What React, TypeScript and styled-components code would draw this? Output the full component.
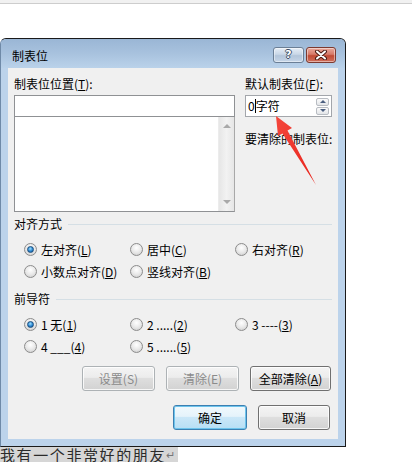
import React from 'react';
import styled, { createGlobalStyle } from 'styled-components';

const Global = createGlobalStyle`
  html, body { margin: 0; padding: 0; background: #fff; }
  body {
    font-family: "Noto Sans CJK SC", "Noto Sans", sans-serif;
    font-size: 12px;
    color: #000;
  }
`;

const Page = styled.div`
  position: relative;
  width: 412px;
  height: 462px;
  overflow: hidden;
  display: flex;
  flex-direction: column;
`;

const TopBand = styled.div`
  height: 4px;
  background: #f1f1f1;
  border-bottom: 1px solid #cdcdcd;
`;

const Dialog = styled.div`
  margin-top: 34px;
  width: 346px;
  box-sizing: border-box;
  border: 1px solid #1a1a1a;
  border-left-color: #6f8aa8;
  border-radius: 6px 6px 0 0;
  background: #bcd3eb;
  display: flex;
  flex-direction: column;
`;

const TitleBar = styled.div`
  height: 29px;
  box-sizing: border-box;
  padding: 0 9px 0 11px;
  display: flex;
  align-items: flex-start;
  border-radius: 5px 5px 0 0;
  background: linear-gradient(#9ab6d5 0%, #a8c2de 50%, #bad2ea 100%);
`;

const Title = styled.div`
  margin-top: 9px;
  line-height: 16px;
  flex: 1;
  color: #000;
`;

const CaptionButtons = styled.div`
  margin-top: 8px;
  display: flex;
  gap: 2px;
`;

const CapButton = styled.div<{ $close?: boolean }>`
  width: ${p => (p.$close ? 30 : 31)}px;
  height: 16px;
  box-sizing: border-box;
  border: 1px solid ${p => (p.$close ? '#7c3a30' : '#6b7f96')};
  border-radius: 3px;
  background: ${p =>
    p.$close
      ? 'linear-gradient(#e9a99c 0%, #d77a69 45%, #c14a34 55%, #d0705c 100%)'
      : 'linear-gradient(#e6eef7 0%, #c9d7e7 45%, #b3c5da 55%, #c6d6e8 100%)'};
  display: flex;
  align-items: center;
  justify-content: center;
  box-shadow: inset 0 0 0 1px rgba(255, 255, 255, 0.45);
`;

const HelpGlyph = styled.span`
  font-family: "DejaVu Sans", sans-serif;
  font-weight: bold;
  font-size: 11px;
  line-height: 12px;
  color: #fff;
  text-shadow: 1px 0 0 #3d4f66, -1px 0 0 #3d4f66, 0 1px 0 #3d4f66, 0 -1px 0 #3d4f66;
`;

const Frame = styled.div`
  padding: 0 7px 7px 7px;
  display: flex;
`;

const Client = styled.div`
  width: 330px;
  height: 371px;
  box-sizing: border-box;
  background: #f0f0f0;
  padding: 5px 6px 9px 6px;
  display: flex;
  flex-direction: column;
`;

const TopRow = styled.div`
  display: flex;
  gap: 10px;
`;

const LeftCol = styled.div`
  width: 221px;
  display: flex;
  flex-direction: column;
`;

const RightCol = styled.div`
  width: 87px;
  display: flex;
  flex-direction: column;
`;

const Label = styled.div<{ $gap?: number }>`
  line-height: ${p => (p.$gap ? 16 : 22)}px;
  height: ${p => (p.$gap ? 16 : 22)}px;
  margin-top: ${p => p.$gap ?? 0}px;
  white-space: nowrap;
`;

const TextBox = styled.div`
  height: 22px;
  box-sizing: border-box;
  border: 1px solid #8f9194;
  background: #fff;
`;

const List = styled.div`
  height: 95px;
  box-sizing: border-box;
  border: 1px solid #8f9194;
  border-top: none;
  border-right-color: #a8a8a8;
  background: #fff;
  display: flex;
  justify-content: flex-end;
`;

const ScrollTrack = styled.div`
  width: 16px;
  background: linear-gradient(90deg, #e6e6e6, #f2f2f2 50%, #e6e6e6);
  border-left: 1px solid #ececec;
  display: flex;
  flex-direction: column;
  justify-content: space-between;
  align-items: center;
  padding: 7px 0;
  box-sizing: border-box;
`;

const Tri = styled.span<{ $down?: boolean }>`
  width: 0;
  height: 0;
  border-left: 4px solid transparent;
  border-right: 4px solid transparent;
  ${p => (p.$down ? 'border-top: 4px solid #a9a9a9;' : 'border-bottom: 4px solid #a9a9a9;')}
`;

const SpinBox = styled.div`
  height: 22px;
  box-sizing: border-box;
  border: 1px solid #a3a6ab;
  background: #fff;
  display: flex;
  align-items: center;
  padding: 0 2px 0 2px;
`;

const SpinText = styled.span`
  flex: 1;
  line-height: 18px;
  display: flex;
  align-items: center;
`;

const Caret = styled.span`
  width: 1px;
  height: 14px;
  background: #000;
`;

const SpinButtons = styled.div`
  display: flex;
  flex-direction: column;
  gap: 1px;
`;

const SpinBtn = styled.div`
  width: 13px;
  height: 8px;
  box-sizing: border-box;
  border: 1px solid #b8bcc2;
  border-radius: 2px;
  background: linear-gradient(#fbfbfb, #e3e5e8);
  display: flex;
  align-items: center;
  justify-content: center;
`;

const SmallTri = styled.span<{ $down?: boolean }>`
  width: 0;
  height: 0;
  border-left: 3px solid transparent;
  border-right: 3px solid transparent;
  ${p => (p.$down ? 'border-top: 3px solid #4b5f80;' : 'border-bottom: 3px solid #4b5f80;')}
`;

const GroupHeader = styled.div<{ $mt: number }>`
  margin-top: ${p => p.$mt}px;
  height: 16px;
  line-height: 16px;
  display: flex;
  align-items: center;
  gap: 6px;
  &::after {
    content: '';
    flex: 1;
    height: 1px;
    background: #d5dfe5;
  }
`;

const RadioGrid = styled.div`
  margin-top: 6px;
  padding-left: 10px;
  display: grid;
  grid-template-columns: 106px 105px 1fr;
  grid-auto-rows: 22px;
`;

const RadioItem = styled.div`
  display: flex;
  align-items: center;
  gap: 4px;
  white-space: nowrap;
`;

const RadioCircle = styled.span<{ $on?: boolean }>`
  width: 13px;
  height: 13px;
  box-sizing: border-box;
  border-radius: 50%;
  border: 1px solid #8c8c8c;
  background: radial-gradient(circle at 50% 35%, #ffffff 0%, #e9e9e9 50%, #c9c9c9 100%);
  display: flex;
  align-items: center;
  justify-content: center;
  &::after {
    content: '';
    display: ${p => (p.$on ? 'block' : 'none')};
    width: 7px;
    height: 7px;
    box-sizing: border-box;
    border-radius: 50%;
    border: 1px solid #1b4e7d;
    background: radial-gradient(circle at 45% 35%, #9fe0ff 0%, #2b86d0 55%, #0e4f8e 100%);
  }
`;

const ButtonRow = styled.div<{ $mt: number; $pr: number }>`
  margin-top: ${p => p.$mt}px;
  padding-right: ${p => p.$pr}px;
  display: flex;
  justify-content: flex-end;
  gap: 11px;
`;

const Button = styled.div<{ $w: number; $disabled?: boolean; $default?: boolean }>`
  width: ${p => p.$w}px;
  height: 25px;
  box-sizing: border-box;
  border-radius: 3px;
  border: 1px solid ${p => (p.$disabled ? '#adb2b5' : p.$default ? '#3c7fb1' : '#707070')};
  background: ${p =>
    p.$default
      ? 'linear-gradient(#f1f9fd 0%, #e5f3fb 45%, #cae7f8 50%, #b7dff5 100%)'
      : 'linear-gradient(#f4f4f4 0%, #ececec 45%, #dedede 50%, #d2d2d2 100%)'};
  box-shadow: inset 0 0 0 1px ${p => (p.$default ? '#6dc4ec' : 'rgba(255,255,255,0.8)')};
  color: ${p => (p.$disabled ? '#8b8b8b' : '#000')};
  display: flex;
  align-items: center;
  justify-content: center;
  line-height: 16px;
`;

const Para = styled.div`
  align-self: flex-start;
  font-size: 15px;
  letter-spacing: 1.6px;
  line-height: 15px;
  height: 15px;
  padding-right: 3px;
  background: #d6d6d6;
  color: #2a2a2a;
  white-space: nowrap;
  display: flex;
  align-items: center;
`;

const ReturnMark = styled.span`
  font-size: 11px;
  color: #777;
  letter-spacing: 0;
`;

const ArrowLayer = styled.svg`
  position: absolute;
  left: 0;
  top: 0;
  pointer-events: none;
`;

const Radio = ({ on, children }: { on?: boolean; children: React.ReactNode }) => (
  <RadioItem>
    <RadioCircle $on={on} />
    <span>{children}</span>
  </RadioItem>
);

export default function App() {
  return (
    <Page>
      <Global />
      <TopBand />
      <Dialog>
        <TitleBar>
          <Title>制表位</Title>
          <CaptionButtons>
            <CapButton>
              <HelpGlyph>?</HelpGlyph>
            </CapButton>
            <CapButton $close>
              <svg width="14" height="10" viewBox="0 0 14 10">
                <path d="M3 1.5 L11 8.5 M11 1.5 L3 8.5" stroke="#4a1a12" strokeWidth="4" strokeLinecap="round" />
                <path d="M3 1.5 L11 8.5 M11 1.5 L3 8.5" stroke="#fff" strokeWidth="2" strokeLinecap="round" />
              </svg>
            </CapButton>
          </CaptionButtons>
        </TitleBar>
        <Frame>
          <Client>
            <TopRow>
              <LeftCol>
                <Label>
                  制表位位置(<u>T</u>):
                </Label>
                <TextBox />
                <List>
                  <ScrollTrack>
                    <Tri />
                    <Tri $down />
                  </ScrollTrack>
                </List>
              </LeftCol>
              <RightCol>
                <Label>
                  默认制表位(<u>F</u>):
                </Label>
                <SpinBox>
                  <SpinText>
                    0<Caret />字符
                  </SpinText>
                  <SpinButtons>
                    <SpinBtn>
                      <SmallTri />
                    </SpinBtn>
                    <SpinBtn>
                      <SmallTri $down />
                    </SpinBtn>
                  </SpinButtons>
                </SpinBox>
                <Label $gap={14}>要清除的制表位:</Label>
              </RightCol>
            </TopRow>

            <GroupHeader $mt={4}>对齐方式</GroupHeader>
            <RadioGrid>
              <Radio on>
                左对齐(<u>L</u>)
              </Radio>
              <Radio>
                居中(<u>C</u>)
              </Radio>
              <Radio>
                右对齐(<u>R</u>)
              </Radio>
              <Radio>
                小数点对齐(<u>D</u>)
              </Radio>
              <Radio>
                竖线对齐(<u>B</u>)
              </Radio>
            </RadioGrid>

            <GroupHeader $mt={9}>前导符</GroupHeader>
            <RadioGrid>
              <Radio on>
                1 无(<u>1</u>)
              </Radio>
              <Radio>
                2 .....(<u>2</u>)
              </Radio>
              <Radio>
                3 ----(<u>3</u>)
              </Radio>
              <Radio>
                4 ___(<u>4</u>)
              </Radio>
              <Radio>
                5 ......(<u>5</u>)
              </Radio>
            </RadioGrid>

            <ButtonRow $mt={9} $pr={1}>
              <Button $w={73} $disabled>
                设置(S)
              </Button>
              <Button $w={73} $disabled>
                清除(E)
              </Button>
              <Button $w={81}>
                全部清除(<u>A</u>)
              </Button>
            </ButtonRow>
            <ButtonRow $mt={14} $pr={2}>
              <Button $w={74} $default>
                确定
              </Button>
              <Button $w={72}>取消</Button>
            </ButtonRow>
          </Client>
        </Frame>
      </Dialog>
      <Para>
        我有一个非常好的朋友<ReturnMark>↵</ReturnMark>
      </Para>

      <ArrowLayer width="412" height="462" viewBox="0 0 412 462">
        <defs>
          <linearGradient id="ar" x1="0" y1="0" x2="1" y2="1">
            <stop offset="0" stopColor="#f4473c" />
            <stop offset="1" stopColor="#e8231b" />
          </linearGradient>
        </defs>
        <polygon points="276,116 292,128 287.5,130.5 316,185 282.5,133.5 278,136" fill="url(#ar)" />
      </ArrowLayer>
    </Page>
  );
}
